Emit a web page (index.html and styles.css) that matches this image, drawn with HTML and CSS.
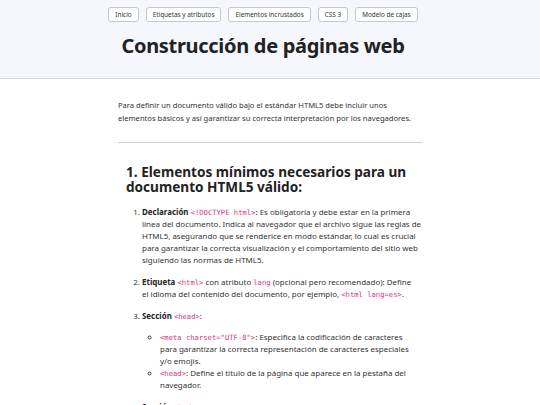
FILE: index.html
```html
<!DOCTYPE html>
<html lang="es">
<head>
<meta charset="UTF-8">
<title>Construcción de páginas web</title>
<link rel="stylesheet" href="styles.css">
</head>
<body>
<header class="site-header">
  <nav class="nav">
    <a class="nav-btn" href="#">Inicio</a>
    <a class="nav-btn" href="#">Etiquetas y atributos</a>
    <a class="nav-btn" href="#">Elementos incrustados</a>
    <a class="nav-btn" href="#">CSS 3</a>
    <a class="nav-btn" href="#">Modelo de cajas</a>
  </nav>
  <h1 class="title">Construcción de páginas web</h1>
</header>
<main class="content">
  <p class="intro">Para definir un documento válido bajo el estándar HTML5 debe incluir unos<br>elementos básicos y así garantizar su correcta interpretación por los navegadores.</p>
  <hr class="divider">
  <section class="section">
    <h2 class="section-title">1. Elementos mínimos necesarios para un documento HTML5 válido:</h2>
    <ol class="steps">
      <li><strong>Declaración</strong> <code>&lt;!DOCTYPE html&gt;</code>: Es obligatoria y debe estar en la primera línea del documento. Indica al navegador que el archivo sigue las reglas de HTML5, asegurando que se renderice en modo estándar, lo cual es crucial para garantizar la correcta visualización y el comportamiento del sitio web siguiendo las normas de HTML5.</li>
      <li><strong>Etiqueta</strong> <code>&lt;html&gt;</code> con atributo <code>lang</code> (opcional pero recomendado): Define el&nbsp;idioma del contenido del documento, por ejemplo, <code>&lt;html lang=es&gt;</code>.</li>
      <li><strong>Sección</strong> <code>&lt;head&gt;</code>:
        <ul class="sub">
          <li><code>&lt;meta charset="UTF-8"&gt;</code>: Especifica la codificación de caracteres para garantizar la correcta representación de caracteres especiales y/o emojis.</li>
          <li><code>&lt;head&gt;</code>: Define el título de la página que aparece en la pestaña del navegador.</li>
        </ul>
      </li>
      <li><strong>Sección</strong> <code>&lt;body&gt;</code>: Contiene todo el contenido visible de la página web, como textos, imágenes y enlaces.</li>
    </ol>
  </section>
</main>
</body>
</html>
```
FILE: styles.css
```css
* { box-sizing: border-box; }
html, body { margin: 0; padding: 0; }
body {
  font-family: "Noto Sans", "Open Sans", sans-serif;
  color: #2b2b2b;
  background: #ffffff;
}
.site-header {
  background: #f5f7fc;
  border-bottom: 1px solid #d3d6dc;
  padding: 7px 14px 14px 0;
  height: 79px;
}
.nav {
  display: flex;
  justify-content: center;
  gap: 7px;
}
.nav-btn {
  display: block;
  height: 15px;
  line-height: 13px;
  padding: 0 6px;
  font-size: 6.4px;
  color: #333;
  text-decoration: none;
  background: #fff;
  border: 1px solid #c4c8cf;
  border-radius: 3px;
}
.title {
  margin: 9px 0 0;
  text-align: center;
  font-size: 20px;
  letter-spacing: -0.3px;
  line-height: 30px;
  font-weight: 700;
  color: #222;
}
.content {
  width: 304px;
  margin: 0 auto;
  padding-top: 20px;
}
.intro {
  margin: 0;
  font-size: 7.6px;
  line-height: 13px;
  color: #333;
}
.divider {
  margin: 17px 0 0;
  border: 0;
  border-top: 1px solid #cfcfcf;
}
.section {
  padding: 0 0 0 8px;
  margin-right: -2px;
}
.section-title {
  margin: 21px 0 0;
  font-size: 13.6px;
  line-height: 15px;
  font-weight: 700;
  color: #222;
}
.steps {
  margin: 12px 0 0;
  padding-left: 16px;
  font-size: 7.95px;
  line-height: 12px;
  color: #333;
}
.steps > li { margin-bottom: 10px; }
.steps strong { color: #222; }
code {
  font-family: "DejaVu Sans Mono", monospace;
  font-size: 7.2px;
  line-height: 1;
  color: #d63384;
}
.sub {
  list-style: circle;
  margin: 9px 9px 0 0;
  padding-left: 18px;
}
```
